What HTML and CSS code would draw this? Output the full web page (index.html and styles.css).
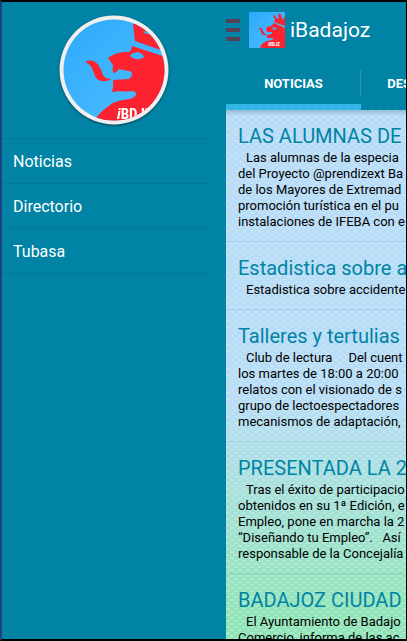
FILE: index.html
```html
<!DOCTYPE html>
<html lang="es">
<head>
<meta charset="utf-8">
<title>iBadajoz</title>
<link rel="stylesheet" href="styles.css">
</head>
<body>
<svg class="defs" aria-hidden="true">
  <defs>
    <linearGradient id="sky" x1="0" y1="0" x2="1" y2="1">
      <stop offset="0" stop-color="#2ba9fb"/>
      <stop offset="1" stop-color="#52bfff"/>
    </linearGradient>
  </defs>
</svg>
<div class="app">
  <aside class="drawer">
    <div class="profile">
      <svg class="avatar" viewBox="0 0 110 110" role="img" aria-label="iBadajoz">
        <clipPath id="disc"><circle cx="55" cy="55" r="50.500"/></clipPath>
        <circle cx="55" cy="55" r="54.500" fill="#f0eeee"/>
        <g clip-path="url(#disc)">
          <rect width="110" height="110" fill="url(#sky)"/>
          <path fill="#fd2230" d="M73 31L110 43V110H33Q38 98 54 88Q60 85 71 84Q77 82 77 79Q77 76 72 76Q66 77 61 76L53 77Q55 70 54 65L70 64Q73 62 73 59Q73 56 69 56L60 54Q58 57 55 58Q53 57 54 50L49 43L52 41Q57 38 64 37L70 37Q73 35 73 31Z"/>
          <path fill="#fd2230" d="M26 47C34 43 39 48 42 55C44 61 46 64 52 64C48 67 42 67 38 64C34 60 35 50 26 47Z"/>
          <path fill="#fd2230" d="M74 9L110 5V38L76 26Z"/>
          <path fill="#3cb5ff" d="M71 41C74 36 83 36 85 42C82 45 75 45 71 41ZM84 17Q88 15 92 19Q88 20 84 17Z"/>
          <text class="brand" x="58" y="104" font-size="15"><tspan font-style="italic">i</tspan>BDJZ</text>
        </g>
      </svg>
    </div>
    <nav class="menu">
      <a href="#noticias">Noticias</a>
      <a href="#directorio">Directorio</a>
      <a href="#tubasa">Tubasa</a>
    </nav>
  </aside>
  <main class="page">
    <header class="bar">
      <div class="title-row">
        <button class="toggle" type="button" aria-label="Menú"><span></span><span></span><span></span></button>
        <svg class="logo" viewBox="0 0 36 36" aria-hidden="true">
          <rect width="36" height="36" fill="url(#sky)"/>
          <path fill="#fd2230" d="M11 36Q12 31 18 29L23 28Q25 27 24 26L18 26L18 23L23 22V20L18 20L17 16Q19 14 22 14L25 11L36 16V36Z"/>
          <path fill="#fd2230" d="M9 16Q13 15 14 19Q15 22 18 23Q13 24 12 20Q12 17 9 16Z"/>
          <path fill="#fd2230" d="M24 4L26 3L27 6L30 7L29 3L31 1L33 6L34 8L36 4V14L25 10L26 7Z"/>
          <path fill="#3cb5ff" d="M23 16L25 15L28 17L25 18Z"/>
          <text class="brand" x="19" y="34" font-size="5">iBDJZ</text>
        </svg>
        <h1>iBadajoz</h1>
      </div>
      <nav class="tabs">
        <a class="active" href="#noticias">NOTICIAS</a>
        <a href="#destacados">DESTACADOS</a>
      </nav>
    </header>
    <div class="feed" id="noticias">
      <article>
        <h2>LAS ALUMNAS DE</h2>
        <p>Las alumnas de la especia<br>del Proyecto @prendizext Ba<br>de los Mayores de Extremad<br>promoción turística en el pu<br>instalaciones de IFEBA con e</p>
      </article>
      <article>
        <h2>Estadistica sobre a</h2>
        <p>Estadistica sobre accidente</p>
      </article>
      <article>
        <h2>Talleres y tertulias</h2>
        <p>Club de lectura &nbsp; &nbsp; Del cuent<br>los martes de 18:00 a 20:00<br>relatos con el visionado de s<br>grupo de lectoespectadores<br>mecanismos de adaptación,</p>
      </article>
      <article>
        <h2>PRESENTADA LA 2</h2>
        <p>Tras el éxito de participacio<br>obtenidos en su 1ª Edición, e<br>Empleo, pone en marcha la 2<br>“Diseñando tu Empleo”. &nbsp; Así<br>responsable de la Concejalía</p>
      </article>
      <article>
        <h2>BADAJOZ CIUDAD</h2>
        <p>El Ayuntamiento de Badajo<br>Comercio, informa de las ac</p>
      </article>
    </div>
  </main>
</div>
</body>
</html>
```
FILE: styles.css
```css
* { box-sizing: border-box; }

body {
  margin: 0;
  background: #000;
  font-family: Roboto, "Liberation Sans", sans-serif;
}

a { color: inherit; text-decoration: none; }

.defs { position: absolute; width: 0; height: 0; }

.app {
  display: grid;
  grid-template-columns: 224px minmax(0, 1fr);
  height: 100vh;
  overflow: hidden;
  border: solid #000;
  border-width: 2px 1px 2px 2px;
  border-left-color: #1c427f;
  background: #0083a4;
}

.profile {
  display: flex;
  justify-content: center;
  height: 136px;
  padding-top: 13px;
}

.avatar {
  width: 110px;
  height: 110px;
  filter: drop-shadow(0 1px 1px rgba(0, 0, 0, 0.5));
}

.brand {
  fill: #fff;
  font-family: "Roboto Condensed", Roboto, sans-serif;
  font-weight: 700;
}

.menu { margin-right: 16px; border-top: 1px solid #007896; }

.menu a {
  display: flex;
  align-items: center;
  height: 45px;
  padding-left: 11px;
  border-bottom: 1px solid #007896;
  color: #fff;
  font-size: 16px;
}

.page {
  display: flex;
  flex-direction: column;
  min-height: 0;
  overflow: hidden;
}

.bar { flex: none; color: #fff; }

.title-row {
  display: flex;
  align-items: center;
  height: 55px;
}

.toggle {
  display: flex;
  flex-direction: column;
  gap: 5px;
  width: 14px;
  margin-right: 9px;
  padding: 0;
  border: 0;
  background: none;
}

.toggle span { width: 14px; height: 4px; background: #534158; }

.logo { width: 36px; height: 36px; }

h1 {
  margin: 0 0 0 5px;
  font-size: 21px;
  font-weight: 400;
}

.tabs { display: flex; height: 53px; }

.tabs a {
  position: relative;
  flex: none;
  width: 135px;
  padding-top: 2px;
  border-bottom: 6px solid transparent;
  font-size: 13px;
  font-weight: 700;
  line-height: 50px;
  text-align: center;
}

.tabs .active { border-bottom-color: #33b5e5; }

.tabs .active::after {
  content: "";
  position: absolute;
  top: 13px;
  right: 0;
  width: 1px;
  height: 27px;
  background: #2795b2;
}

.feed {
  flex: 1;
  min-height: 0;
  overflow: hidden;
  background:
    linear-gradient(rgba(0, 40, 80, 0.2), transparent) top / 100% 6px no-repeat,
    radial-gradient(ellipse 2px 1px at 2px 1px, rgba(205, 245, 215, 0.4) 90%, transparent) 0 0 / 8px 6px,
    radial-gradient(ellipse 2px 1px at 6px 4px, rgba(205, 245, 215, 0.4) 90%, transparent) 0 0 / 8px 6px,
    linear-gradient(#b9dafd 0%, #b9dcfb 55%, #91e4b9 95%);
}

article {
  padding: 12px 0 11px 12px;
  border-bottom: 1px solid rgba(0, 70, 100, 0.1);
  white-space: nowrap;
}

h2 {
  margin: 0;
  color: #0083a4;
  font-size: 20px;
  font-weight: 400;
  line-height: 28px;
}

p {
  margin: 0;
  color: #000;
  font-size: 13px;
  line-height: 16px;
  text-indent: 8px;
}
```
